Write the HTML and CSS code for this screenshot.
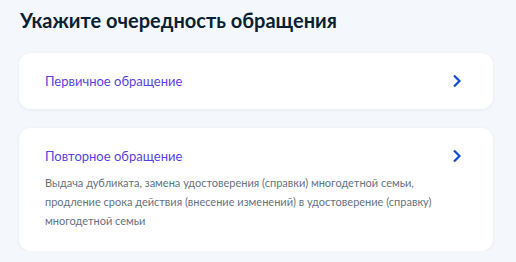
FILE: index.html
```html
<!DOCTYPE html>
<html lang="ru">
<head>
  <meta charset="UTF-8" />
  <title>Очередность обращения</title>
  <link rel="stylesheet" href="styles.css">
</head>
<body>
  <h1 class="page-title">Укажите очередность обращения</h1>

  <div class="options">
    <a class="option-card" href="#">
      <div class="option-text">
        <div class="option-title">Первичное обращение</div>
      </div>
      <svg class="chevron" width="10" height="14" viewBox="0 0 10 14">
        <path d="M2 1.5 L7.5 7 L2 12.5" fill="none" stroke="#0d4cd3" stroke-width="2.2" />
      </svg>
    </a>

    <a class="option-card" href="#">
      <div class="option-text">
        <div class="option-title">Повторное обращение</div>
        <p class="option-desc">Выдача дубликата, замена удостоверения (справки) многодетной семьи, продление срока действия (внесение изменений) в удостоверение (справку) многодетной семьи</p>
      </div>
      <svg class="chevron" width="10" height="14" viewBox="0 0 10 14">
        <path d="M2 1.5 L7.5 7 L2 12.5" fill="none" stroke="#0d4cd3" stroke-width="2.2" />
      </svg>
    </a>
  </div>
</body>
</html>
```

FILE: styles.css
```css
body {
  margin: 0;
  padding: 8px 23px 0 19px;
  background: #f4f7fc;
  font-family: Lato, 'Noto Sans', sans-serif;
  color: #0b1f33;
}

.page-title {
  margin: 0 0 0 1px;
  font-size: 20px;
  line-height: 24px;
  font-weight: 700;
  color: #0b1f33;
}

.options {
  display: flex;
  flex-direction: column;
  gap: 19px;
  margin-top: 21px;
}

.option-card {
  display: flex;
  align-items: flex-start;
  padding: 18px 31px 18px 26px;
  background: #fff;
  border-radius: 12px;
  box-shadow: 0 1px 4px rgba(11, 31, 51, 0.06);
  text-decoration: none;
}

.option-card:last-child {
  padding-bottom: 21px;
}

.option-text {
  flex: 1;
  min-width: 0;
}

.option-title {
  font-size: 13px;
  line-height: 20px;
  color: #5a3fe0;
}

.option-desc {
  margin: 7px 0 0;
  font-size: 11px;
  line-height: 19px;
  color: #66727f;
}

.chevron {
  flex-shrink: 0;
  margin-top: 3px;
  margin-left: 2px;
}
```
